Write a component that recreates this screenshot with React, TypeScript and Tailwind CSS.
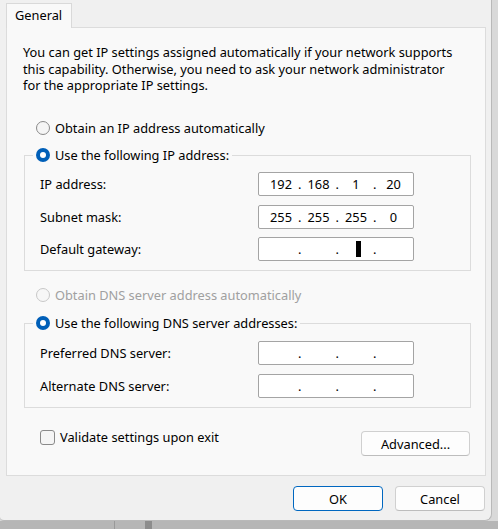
import React from 'react';

const FONT = { fontFamily: '"Segoe UI", "Noto Sans", sans-serif' };

type RadioState = 'on' | 'off' | 'disabled';

function Radio({ state }: { state: RadioState }) {
  if (state === 'on') {
    return (
      <span className="w-[14px] h-[14px] rounded-full bg-[#005fb8] flex items-center justify-center shrink-0">
        <span className="w-[6px] h-[6px] rounded-full bg-white" />
      </span>
    );
  }
  return (
    <span
      className={`w-[14px] h-[14px] rounded-full border shrink-0 ${
        state === 'off' ? 'border-[#8a8a8a] bg-[#f5f5f5]' : 'border-[#c8c8c8] bg-[#f7f7f7]'
      }`}
    />
  );
}

function IpBox({ parts, cursor }: { parts: string[]; cursor?: number }) {
  return (
    <div className="w-[156px] h-[24px] border border-[#a4a4a4] rounded-[2px] bg-white flex items-center pl-[7px] text-black">
      {parts.map((p, i) => (
        <React.Fragment key={i}>
          <span className="w-[30px] h-[16px] flex items-center justify-center leading-[16px]">
            {cursor === i ? <span className="ml-[5px] w-[5px] h-[16px] bg-black" /> : p}
          </span>
          {i < 3 && <span className="w-[7.5px] text-center leading-[16px]">.</span>}
        </React.Fragment>
      ))}
    </div>
  );
}

function Row({ label, children }: { label: string; children: React.ReactNode }) {
  return (
    <div className="flex items-center">
      <span className="w-[218px]">{label}</span>
      {children}
    </div>
  );
}

function Group({
  legend,
  gap,
  children,
  className,
}: {
  legend: string;
  gap: string;
  children: React.ReactNode;
  className: string;
}) {
  return (
    <fieldset className={`ml-[1px] w-[447px] border border-[#dcdcdc] ${className}`}>
      <legend className="ml-[8px] px-[3px]">
        <span className="flex items-center h-[16px] gap-[5px]">
          <Radio state="on" />
          <span>{legend}</span>
        </span>
      </legend>
      <div className={`pl-[15px] flex flex-col ${gap}`}>{children}</div>
    </fieldset>
  );
}

export default function App() {
  return (
    <div className="w-[498px] h-[529px] flex flex-col bg-[#d9d9d9] overflow-hidden" style={FONT}>
      <div className="flex h-[521px]">
        <div className="w-[492px] h-[521px] bg-[#f0f0f0] border-r border-b border-[#b9b9b9] rounded-br-[7px] rounded-bl-[4px] flex flex-col pt-[3px] pl-[6px] text-[12.8px] text-black leading-[16px]">
          {/* tab strip */}
          <div className="relative z-10 -mb-px w-[66px] h-[25px] bg-[#f9f9f9] border-l border-r border-t border-[#d9d9d9] pl-[8px] pt-[3px]">
            General
          </div>

          {/* tab page */}
          <div className="w-[480px] h-[449px] border border-[#dcdcdc] bg-[#f9f9f9] pl-[16px]">
            <p className="mt-[16px] leading-[16.5px]">
              You can get IP settings assigned automatically if your network supports
              <br />
              this capability. Otherwise, you need to ask your network administrator
              <br />
              for the appropriate IP settings.
            </p>

            <div className="mt-[26.5px] ml-[13px] h-[16px] flex items-center gap-[5px]">
              <Radio state="off" />
              <span>Obtain an IP address automatically</span>
            </div>

            <Group legend="Use the following IP address:" gap="gap-[8.5px] pt-[9px] pb-[9px]" className="mt-[11px]">
              <Row label="IP address:">
                <IpBox parts={['192', '168', '1', '20']} />
              </Row>
              <Row label="Subnet mask:">
                <IpBox parts={['255', '255', '255', '0']} />
              </Row>
              <Row label="Default gateway:">
                <IpBox parts={['', '', '', '']} cursor={2} />
              </Row>
            </Group>

            <div className="mt-[16px] ml-[13px] h-[16px] flex items-center gap-[5px] text-[#a0a0a0]">
              <Radio state="disabled" />
              <span>Obtain DNS server address automatically</span>
            </div>

            <Group legend="Use the following DNS server addresses:" gap="gap-[9px] pt-[10px] pb-[9px]" className="mt-[12px]">
              <Row label="Preferred DNS server:">
                <IpBox parts={['', '', '', '']} />
              </Row>
              <Row label="Alternate DNS server:">
                <IpBox parts={['', '', '', '']} />
              </Row>
            </Group>

            <div className="ml-[1px] w-[447px] flex justify-between items-start">
              <label className="mt-[21px] ml-[16px] h-[16px] flex items-center gap-[5px]">
                <span className="w-[15px] h-[15px] rounded-[3px] border border-[#8a8a8a] bg-[#f5f5f5]" />
                <span>Validate settings upon exit</span>
              </label>
              <button className="mt-[23px] mr-[1px] w-[109px] h-[25px] rounded-[4px] border border-[#d0d0d0] border-b-[#bdbdbd] bg-[#fdfdfd]">
                Advanced...
              </button>
            </div>
          </div>

          {/* dialog buttons */}
          <div className="mt-[10px] flex justify-end gap-[12px] pr-[6px]">
            <button className="w-[90px] h-[25px] rounded-[4px] border border-[#0067c0] bg-[#fdfdfd]">OK</button>
            <button className="w-[90px] h-[25px] rounded-[4px] border border-[#d0d0d0] border-b-[#bdbdbd] bg-[#fdfdfd]">
              Cancel
            </button>
          </div>
        </div>
        <div className="flex-1 bg-[#d9d9d9]" />
      </div>
      <div className="flex-1 bg-[#b6b6b6] flex">
        <div className="w-[115px] border-r border-[#999]" />
        <div className="w-[30px]" />
        <div className="w-[7px] bg-[#8c8c8c]" />
      </div>
    </div>
  );
}
